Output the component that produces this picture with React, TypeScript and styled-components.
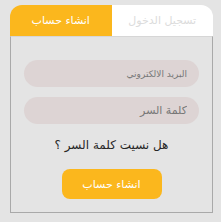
import React from "react";
import styled, { createGlobalStyle } from "styled-components";

const Global = createGlobalStyle`
	body {
		margin: 0;
		background: #e4e4e4;
		font-family: "DejaVu Sans", "Noto Sans", sans-serif;
	}
`;

const Wrapper = styled.div`
	width: 203px;
	padding: 5px 8px 0 10px;
	direction: rtl;
`;

const Tabs = styled.div`
	display: flex;
	height: 31px;
`;

const Tab = styled.div<{ $active?: boolean }>`
	flex: 1;
	display: flex;
	align-items: center;
	justify-content: center;
	font-size: 11px;
	background: ${(p) => (p.$active ? "#fbb71d" : "#ffffff")};
	color: ${(p) => (p.$active ? "#ffffff" : "#dcdcdc")};
	border-top-right-radius: ${(p) => (p.$active ? "0" : "12px")};
	border-top-left-radius: ${(p) => (p.$active ? "12px" : "0")};
`;

const Panel = styled.div`
	height: 177px;
	box-sizing: border-box;
	border: 1px solid #a9a9a9;
	border-top-color: #d6d6d6;
	padding: 23px 13px 0 13px;
	display: flex;
	flex-direction: column;
	align-items: center;
`;

const Input = styled.input<{ $small?: boolean }>`
	width: 175px;
	height: 27px;
	box-sizing: border-box;
	border: none;
	outline: none;
	border-radius: 14px;
	background: #ddd4d4;
	padding: 0 12px;
	margin-bottom: 10px;
	font-family: inherit;
	font-size: ${(p) => (p.$small ? "9px" : "11px")};
	text-align: right;
	direction: rtl;

	&::placeholder {
		color: #777777;
	}
`;

const Forgot = styled.p`
	margin: 4px 0 0;
	font-size: 12px;
	color: #262626;
`;

const Submit = styled.button`
	margin-top: 17px;
	width: 100px;
	height: 30px;
	border: none;
	border-radius: 8px;
	background: #fbb71d;
	color: #ffffff;
	font-family: inherit;
	font-size: 11px;
`;

const App = () => {
	return (
		<Wrapper>
			<Global />
			<Tabs>
				<Tab>تسجيل الدخول</Tab>
				<Tab $active>انشاء حساب</Tab>
			</Tabs>
			<Panel>
				<Input $small placeholder="البريد الالكتروني" />
				<Input type="password" placeholder="كلمة السر" />
				<Forgot>هل نسيت كلمة السر ؟</Forgot>
				<Submit>انشاء حساب</Submit>
			</Panel>
		</Wrapper>
	);
};

export default App;
